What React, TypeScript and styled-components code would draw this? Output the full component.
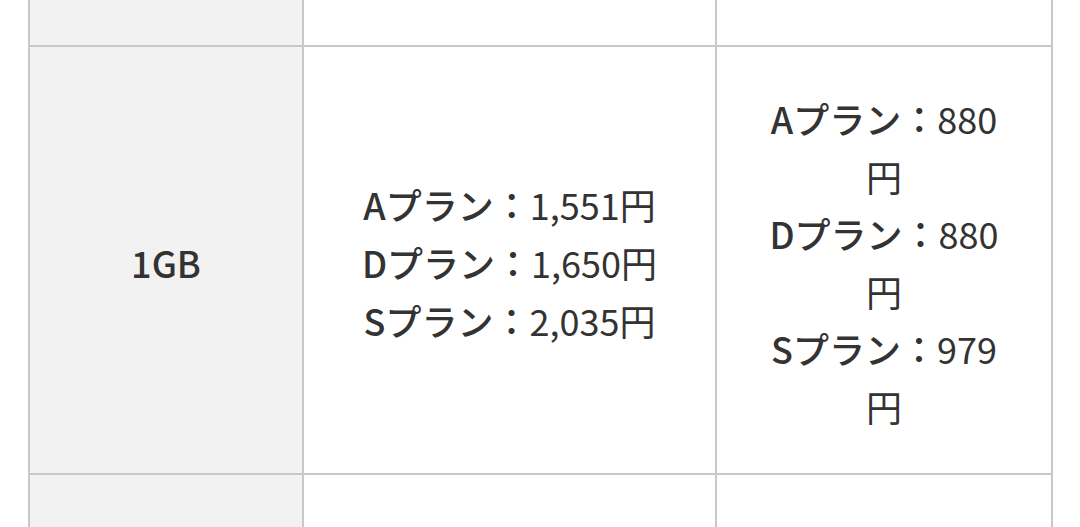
import React from "react";
import styled, { createGlobalStyle } from "styled-components";

const GlobalStyle = createGlobalStyle`
  html, body {
    margin: 0;
    padding: 0;
    background: #ffffff;
  }
  body {
    font-family: "Noto Sans CJK JP", "Noto Sans", sans-serif;
    color: #333333;
  }
`;

const Page = styled.div`
  width: 1080px;
  height: 527px;
  overflow: hidden;
  padding-left: 28px;
  box-sizing: border-box;
`;

const Table = styled.div`
  display: grid;
  grid-template-columns: 274px 413px 336px;
  width: 1025px;
  border-left: 2px solid #c8c8c8;
  box-sizing: border-box;
`;

const Cell = styled.div<{ $head?: boolean; $minH?: number }>`
  box-sizing: border-box;
  border-right: 2px solid #c8c8c8;
  border-bottom: 2px solid #c8c8c8;
  background: ${(p) => (p.$head ? "#f2f2f2" : "#ffffff")};
  min-height: ${(p) => (p.$minH ? `${p.$minH}px` : "0")};
  padding: ${(p) => (p.$minH ? "0" : "43px 40px 37px")};
  display: flex;
  align-items: center;
  justify-content: center;
  text-align: center;
  font-size: 36px;
  line-height: 1.6;
`;

const Label = styled.span`
  font-weight: 500;
`;

const Lines = styled.div`
  text-align: center;
`;

const PlanName = styled.span`
  font-weight: 500;
`;

const plans1 = [
  ["Aプラン：", "1,551円"],
  ["Dプラン：", "1,650円"],
  ["Sプラン：", "2,035円"],
];
const plans2 = [
  ["Aプラン：", "880円"],
  ["Dプラン：", "880円"],
  ["Sプラン：", "979円"],
];

const PlanList = ({ items }: { items: string[][] }) => (
  <Lines>
    {items.map(([name, price], i) => (
      <React.Fragment key={i}>
        <PlanName>{name}</PlanName>
        {price}
        {i < items.length - 1 && <br />}
      </React.Fragment>
    ))}
  </Lines>
);

export default function App() {
  return (
    <>
      <GlobalStyle />
      <Page>
        <Table>
          <Cell $head $minH={47} />
          <Cell $minH={47} />
          <Cell $minH={47} />

          <Cell $head>
            <Label>1GB</Label>
          </Cell>
          <Cell>
            <PlanList items={plans1} />
          </Cell>
          <Cell>
            <PlanList items={plans2} />
          </Cell>

          <Cell $head $minH={80} />
          <Cell $minH={80} />
          <Cell $minH={80} />
        </Table>
      </Page>
    </>
  );
}
